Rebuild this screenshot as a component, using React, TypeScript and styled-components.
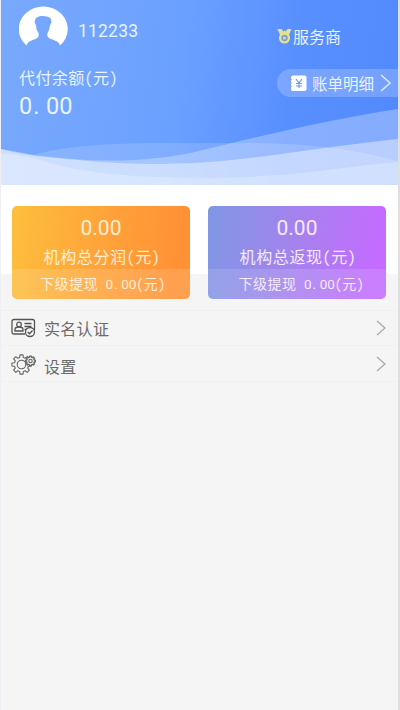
import React from "react";
import styled, { createGlobalStyle } from "styled-components";

const GlobalStyle = createGlobalStyle`
  * { box-sizing: border-box; }
  body { margin: 0; background: #f5f5f5; }
`;

const Screen = styled.main`
  width: 400px;
  height: 710px;
  display: flex;
  flex-direction: column;
  overflow: hidden;
  background: linear-gradient(#fff 0 274px, #f5f5f5 274px);
  border-right: 2px solid #dedfe1;
  border-left: 1px solid #eeeff2;
  font-family: "Noto Sans CJK SC", sans-serif;
  font-feature-settings: "hwid";
`;

const Header = styled.header`
  position: relative;
  height: 185px;
  flex: none;
  display: flex;
  justify-content: space-between;
  color: #eaf3ff;
  background: linear-gradient(97deg, #79a9fd 0%, #6aa0ff 45%, #588fff 72%, #5289fd 100%);
`;

const Waves = styled.svg`
  position: absolute;
  left: 0;
  bottom: 0;
  width: 397px;
  height: 85px;
`;

const Account = styled.section`
  position: relative;
  display: flex;
  flex-direction: column;
  padding: 6px 0 0 18px;
`;

const Profile = styled.div`
  display: flex;
  align-items: flex-start;
  gap: 10px;
  height: 50px;
`;

const UserName = styled.span`
  margin-top: 13px;
  font: 400 17.5px/24px Roboto, sans-serif;
  letter-spacing: 0.2px;
`;

const BalanceLabel = styled.span`
  margin-top: 9px;
  font-size: 16px;
  line-height: 24px;
  letter-spacing: 0.4px;
`;

const Balance = styled.span`
  margin-top: 1px;
  font: 400 23.5px/32px Roboto, sans-serif;
`;

const DecimalPoint = styled.span<{ $gap: number }>`
  margin-left: 1px;
  letter-spacing: ${p => p.$gap}px;
`;

const Actions = styled.section`
  position: relative;
  display: flex;
  flex-direction: column;
  align-items: flex-start;
  padding-top: 25px;
`;

const Role = styled.div`
  display: flex;
  align-items: center;
  gap: 1px;
  height: 22px;
  font-size: 16px;
  line-height: 22px;
`;

const Bill = styled.button`
  display: flex;
  align-items: center;
  width: 121px;
  height: 28px;
  margin-top: 22px;
  padding: 0 5px 0 13px;
  border: 0;
  border-radius: 14px 0 0 14px;
  background: rgba(255, 255, 255, 0.2);
  color: #eaf3ff;
  font: inherit;
  font-size: 15.5px;
  white-space: nowrap;
  svg { flex: none; }
  span { margin: 0 6px 0 5px; line-height: 22px; }
`;

const Cards = styled.section`
  display: grid;
  grid-template-columns: 178px 178px;
  gap: 18px;
  flex: none;
  padding: 21px 0 0 11px;
`;

const Card = styled.article<{ $from: string; $mid: string; $to: string; $ink: string }>`
  height: 93px;
  display: flex;
  flex-direction: column;
  align-items: center;
  overflow: hidden;
  border-radius: 5px;
  color: ${p => p.$ink};
  background: linear-gradient(97deg, ${p => p.$from}, ${p => p.$mid} 50%, ${p => p.$to} 92%);
`;

const CardAmount = styled.strong`
  margin-top: 9px;
  font: 400 21px/26px Roboto, sans-serif;
`;

const CardTitle = styled.span`
  margin: 4px 0 0 2px;
  font-size: 16px;
  line-height: 22px;
  letter-spacing: 0.6px;
`;

const CardFooter = styled.div<{ $indent: number }>`
  width: 100%;
  height: 30px;
  margin-top: auto;
  padding-left: ${p => p.$indent}px;
  background: rgba(255, 255, 255, 0.13);
  font-size: 14px;
  line-height: 29px;
  letter-spacing: 0.5px;
  white-space: nowrap;
`;

const FooterAmount = styled.span`
  font-family: Roboto, sans-serif;
  font-size: 13.5px;
  letter-spacing: 0;
`;

const Menu = styled.nav`
  margin-top: 11px;
  border-top: 1px solid #f1f0f0;
`;

const MenuRow = styled.a<{ $height: number }>`
  display: flex;
  align-items: center;
  height: ${p => p.$height}px;
  padding: 0 12px 0 10px;
  color: #6b6b6b;
  font-size: 16px;
  border-bottom: 1px solid #f2f1f1;
`;

const MenuLabel = styled.span<{ $drop: number }>`
  flex: 1;
  margin-left: 8px;
  padding-top: ${p => p.$drop}px;
  line-height: 24px;
  letter-spacing: 0.3px;
`;

const Avatar = () => (
  <svg width="49" height="41" viewBox="0 0 49 41">
    <path fill="#fff" d="M7.500 39.500A24.500 22.600 0 1 1 41 39.500C40 35.500 36 34.500 32 33C28 31.500 28 29 28.500 27C30 25 30.500 22 31 19.500L32.500 16L31.500 12C28 9.500 20 9 17 12L15.500 15.500L17 19.500C17 22 18 25 19.500 27C20 29 20 31.500 16.500 33C12.500 34.500 8.500 35.500 7.500 39.500Z" />
  </svg>
);

const Medal = () => (
  <svg width="15" height="16" viewBox="0 0 15 16">
    <path d="M.5 1h4l2 2.500 1-1 1 1 2-2.500h4l-2.500 6H3z" fill="#e2df9b" />
    <circle cx="7.500" cy="10" r="4.400" fill="#7da0cf" stroke="#e9e288" strokeWidth="2.300" />
    <circle cx="7.500" cy="10" r="1.600" fill="#cfd5b4" />
  </svg>
);

const BillIcon = () => (
  <svg width="17" height="17" viewBox="0 0 17 17">
    <path d="M3 .5h11.500q2 0 2 2v11.500q0 2-2 2H3q-2 0-2-2v-1.500l1-1-1-1V9l1-1-1-1V5.500l1-1-1-1V2.500q0-2 2-2" fill="#fff" />
    <path d="m6 4 3 4 3-4M6 8.500h6M6 11h6M9 8v5" fill="none" stroke="#6c9cf5" strokeWidth="1.200" />
  </svg>
);

const Chevron = ({ color, size = 16 }: { color: string; size?: number }) => (
  <svg width={size * 0.65} height={size} viewBox="0 0 10.400 16">
    <path d="m1 1 8 7-8 7" fill="none" stroke={color} strokeWidth="1.300" />
  </svg>
);

const IdentityIcon = () => (
  <svg width="25" height="20" viewBox="0 0 25 20" fill="none" stroke="#555" strokeWidth="1.300">
    <path d="M14 16H3q-2 0-2-2V3.500q0-2 2-2h18.500q2 0 2 2V12" />
    <circle cx="8" cy="6.500" r="2.300" />
    <path d="M4 13v-1.500q0-2.500 4-2.500t4 2.500V13zM13.500 5.500h7M13.500 8.500h7M13.500 11.500h3" />
    <circle cx="19" cy="14" r="4.500" fill="#f5f5f5" />
    <path d="m16.700 14 1.800 1.800 3-3.300" />
  </svg>
);

const gear = (cx: number, cy: number, outer: number, inner: number) => {
  const points: string[] = [];
  for (let i = 0; i < 8; i++) {
    [[-0.2, outer], [0.2, outer], [0.32, inner], [0.68, inner]].forEach(([step, r]) => {
      const angle = ((i + step) * Math.PI) / 4;
      points.push(`${(cx + Math.cos(angle) * r).toFixed(2)},${(cy + Math.sin(angle) * r).toFixed(2)}`);
    });
  }
  return points.join(" ");
};

const GearIcon = () => (
  <svg width="25" height="22" viewBox="0 0 25 22" fill="none" stroke="#666" strokeWidth="1.100" strokeLinejoin="round">
    <polygon points={gear(10.500, 11.500, 9.700, 7.200)} />
    <circle cx="10.500" cy="11.500" r="4.300" />
    <polygon points={gear(19.500, 8, 4.900, 3.900)} fill="#f5f5f5" strokeWidth="1.400" />
    <circle cx="19.500" cy="8" r="1.700" />
  </svg>
);

const WaveArt = () => (
  <Waves viewBox="0 0 397 85">
    <path d="M0 49L33 55C55 48 90 44 150 43H250C310 43 360 51 397 61V85H0Z" fill="#fff" opacity=".15" />
    <path d="M0 49L33 55C90 63 150 63 200 50.500C260 36 330 19 397 9V85H0Z" fill="#fff" opacity=".29" />
    <path d="M0 49C15 53 25 55 50 57.500C90 61 140 68 220 61C290 54 345 44 397 39V85H0Z" fill="#fff" opacity=".42" />
    <path d="M0 54C25 53 40 62 75 69C130 79 220 81 300 73C340 69 360 65 397 62V85H0Z" fill="#fff" opacity=".24" />
  </Waves>
);

const cards = [
  { title: "机构总分润(元)", from: "#fdbf3d", mid: "#ffa33a", to: "#ff9135", ink: "#fff0d8", indent: 28 },
  { title: "机构总返现(元)", from: "#7f97e4", mid: "#a681ee", to: "#c36cff", ink: "#f6eaff", indent: 30.5 },
];

const menu = [
  { label: "实名认证", Icon: IdentityIcon, height: 35, drop: 0 },
  { label: "设置", Icon: GearIcon, height: 36, drop: 5 },
];

export default function App() {
  return (
    <>
      <GlobalStyle />
      <Screen>
        <Header>
          <WaveArt />
          <Account>
            <Profile><Avatar /><UserName>112233</UserName></Profile>
            <BalanceLabel>代付余额(元)</BalanceLabel>
            <Balance>0<DecimalPoint $gap={6.5}>.</DecimalPoint>00</Balance>
          </Account>
          <Actions>
            <Role><Medal /><span>服务商</span></Role>
            <Bill><BillIcon /><span>账单明细</span><Chevron color="#dce9ff" size={18} /></Bill>
          </Actions>
        </Header>
        <Cards>
          {cards.map(card => (
            <Card key={card.title} $from={card.from} $mid={card.mid} $to={card.to} $ink={card.ink}>
              <CardAmount>0.00</CardAmount>
              <CardTitle>{card.title}</CardTitle>
              <CardFooter $indent={card.indent}>
                下级提现 <FooterAmount>0<DecimalPoint $gap={3.500}>.</DecimalPoint>00</FooterAmount>(元)
              </CardFooter>
            </Card>
          ))}
        </Cards>
        <Menu>
          {menu.map(({ label, Icon, height, drop }) => (
            <MenuRow key={label} $height={height}>
              <Icon /><MenuLabel $drop={drop}>{label}</MenuLabel><Chevron color="#aaa" />
            </MenuRow>
          ))}
        </Menu>
      </Screen>
    </>
  );
}
